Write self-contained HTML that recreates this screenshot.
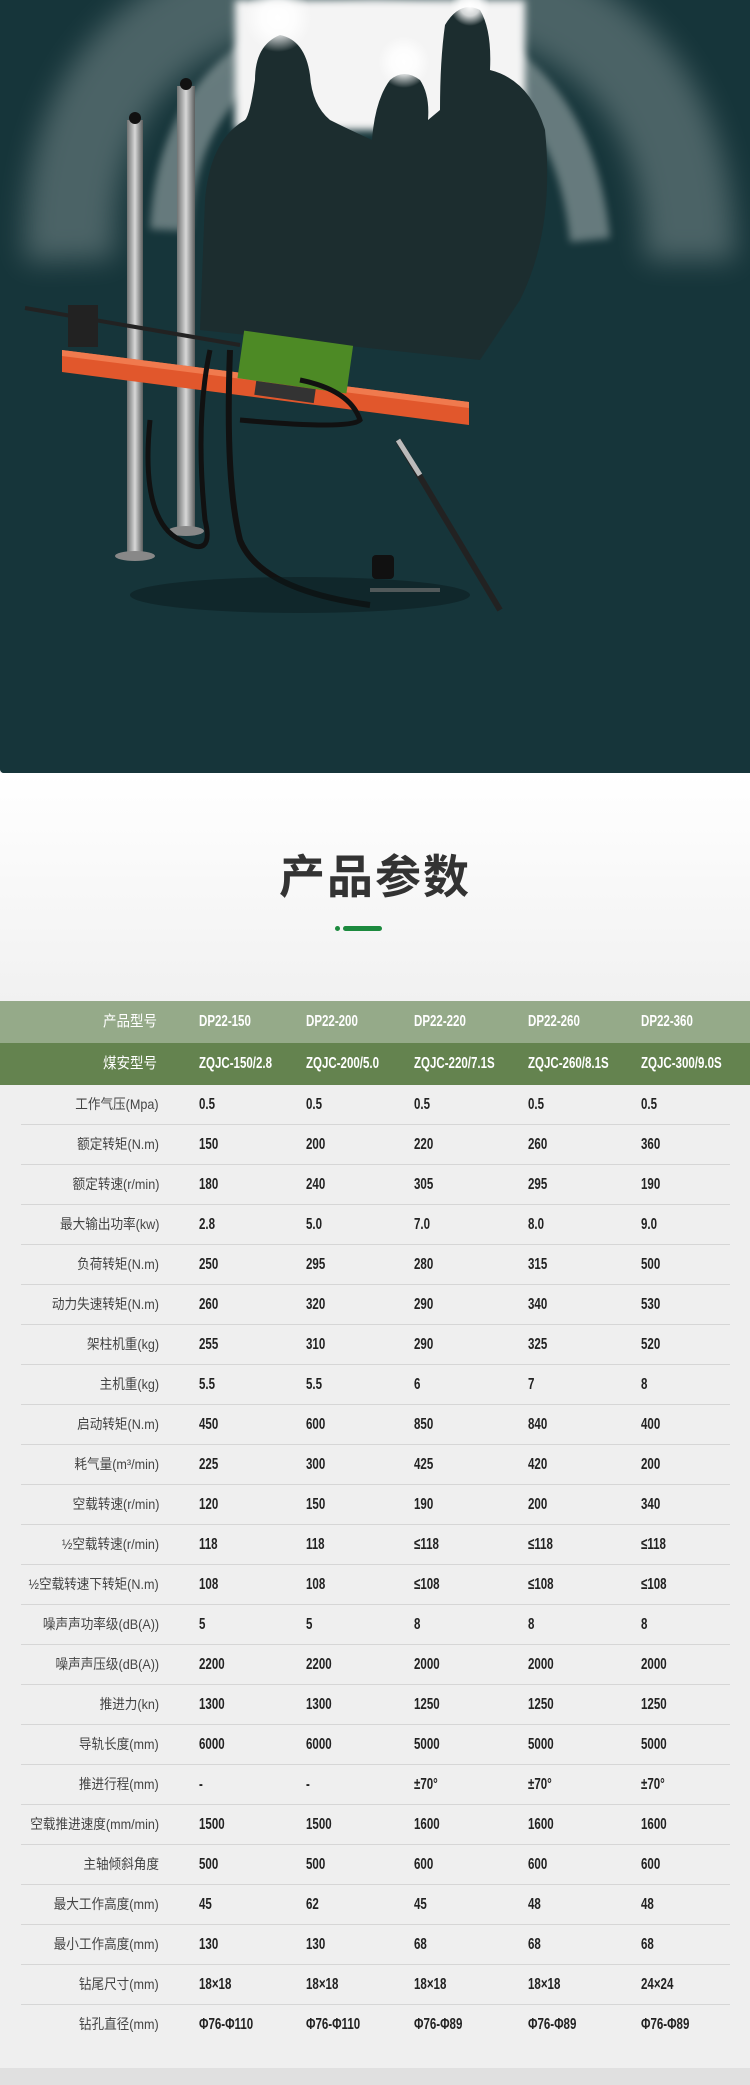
<!DOCTYPE html>
<html><head><meta charset="utf-8"><style>
*{margin:0;padding:0;box-sizing:border-box}
body{width:750px;height:2085px;background:#efefef;font-family:"Liberation Sans","Noto Sans CJK SC",sans-serif;overflow:hidden;position:relative}
.hero{position:absolute;left:0;top:0;width:750px;height:773px;background:#16353a;overflow:hidden;border-bottom-left-radius:4px}
.mid{position:absolute;left:0;top:773px;width:750px;height:228px;background:linear-gradient(#fff,#f1f1f1)}
h1{position:absolute;top:842px;left:0;width:750px;text-align:center;font-size:46px;font-weight:bold;color:#333;letter-spacing:2px;font-family:"Noto Sans CJK SC",sans-serif;line-height:64px}
.dot{position:absolute;left:335px;top:926px;width:5px;height:5px;border-radius:3px;background:#1c8a3e}
.bar{position:absolute;left:343px;top:926px;width:39px;height:5px;border-radius:3px;background:#1c8a3e}
.rows{position:absolute;top:1085px;left:0;width:750px}
.r{position:relative;height:40px;border-bottom:1px solid #d6d6d6;margin:0 20px 0 21px}
.r:last-child{border-bottom:none}
.r span,.hd span{position:absolute;top:0;line-height:39px;font-size:16px;font-weight:bold;color:#222;white-space:nowrap;transform:scaleX(.72);transform-origin:left center}
.r .lab{right:571px;font-weight:normal;font-size:14px;color:#444;transform:scaleX(.9);transform-origin:right center}
.hd{position:absolute;left:0;width:750px;height:42px}
.hd span{line-height:42px;color:#fff}
.hd .lab{right:593px;font-weight:normal;font-size:15px;transform:scaleX(.9);transform-origin:right center}
.c1{left:178px}.c2{left:285px}.c3{left:393px}.c4{left:507px}.c5{left:620px}
.hd .c1{left:199px}.hd .c2{left:306px}.hd .c3{left:414px}.hd .c4{left:528px}.hd .c5{left:641px}
.foot{position:absolute;left:0;top:2068px;width:750px;height:17px;background:#e0e0e0}
</style></head><body>
<div class="hero">
<svg width="750" height="773" viewBox="0 0 750 773">
<defs>
<filter id="bl" x="-20%" y="-20%" width="140%" height="140%"><feGaussianBlur stdDeviation="14"/></filter>
<filter id="bl2"><feGaussianBlur stdDeviation="4"/></filter>
<radialGradient id="glow" cx="0.5" cy="0.5" r="0.5"><stop offset="0" stop-color="#fff"/><stop offset=".5" stop-color="#fff" stop-opacity=".8"/><stop offset="1" stop-color="#fff" stop-opacity="0"/></radialGradient>
<linearGradient id="col" x1="0" x2="1"><stop offset="0" stop-color="#6f7272"/><stop offset=".5" stop-color="#d8d8d8"/><stop offset="1" stop-color="#5a5d5d"/></linearGradient>
</defs>
<rect width="750" height="773" fill="#16353a"/>
<path d="M70 260 Q60 -10 375 -30 Q690 -10 690 260" fill="none" stroke="#8c9b9c" stroke-width="90" opacity=".45" filter="url(#bl)"/>
<path d="M170 230 Q180 40 375 20 Q570 40 590 240" fill="none" stroke="#b5bfbf" stroke-width="40" opacity=".5" filter="url(#bl2)"/>
<rect x="235" y="0" width="290" height="130" fill="#f4f4f4" filter="url(#bl2)"/>
<path d="M200 330 L205 200 Q210 140 245 120 Q250 115 255 80 Q255 45 280 35 Q305 40 310 75 Q312 105 330 120 Q350 130 372 140 Q375 100 390 80 Q404 68 420 80 Q430 95 428 120 L440 110 Q440 60 445 25 Q460 0 480 10 Q492 30 490 70 Q530 80 545 130 Q555 230 520 300 L480 360 Z" fill="#1c2d2f"/>
<circle cx="278" cy="18" r="34" fill="url(#glow)"/>
<circle cx="404" cy="62" r="26" fill="url(#glow)"/>
<circle cx="470" cy="6" r="20" fill="url(#glow)"/>
<rect x="127" y="120" width="16" height="440" fill="url(#col)"/>
<rect x="177" y="86" width="18" height="445" fill="url(#col)"/>
<circle cx="135" cy="118" r="6" fill="#111"/><circle cx="186" cy="84" r="6" fill="#111"/>
<ellipse cx="135" cy="556" rx="20" ry="5" fill="#888"/>
<ellipse cx="186" cy="531" rx="18" ry="5" fill="#888"/>
<line x1="25" y1="308" x2="240" y2="345" stroke="#222" stroke-width="4"/>
<rect x="68" y="305" width="30" height="42" fill="#222"/>
<polygon points="62,350 469,402 469,425 62,372" fill="#e1572c"/>
<polygon points="62,350 469,402 469,408 62,356" fill="#f07a4e"/>
<rect x="240" y="338" width="110" height="48" fill="#4d8a25" transform="rotate(8 295 364)"/>
<rect x="255" y="385" width="60" height="14" fill="#333" transform="rotate(8 285 392)"/>
<path d="M210 350 Q195 420 205 520 Q215 560 180 540 Q140 520 150 420" fill="none" stroke="#111" stroke-width="5"/>
<path d="M230 350 Q225 480 240 540 Q260 590 370 605" fill="none" stroke="#111" stroke-width="6"/>
<path d="M300 380 Q350 390 360 420 Q350 430 240 420" fill="none" stroke="#111" stroke-width="5"/>
<line x1="398" y1="440" x2="500" y2="610" stroke="#222" stroke-width="6"/>
<line x1="398" y1="440" x2="420" y2="475" stroke="#bbb" stroke-width="5"/>
<rect x="372" y="555" width="22" height="24" rx="4" fill="#111"/>
<line x1="370" y1="590" x2="440" y2="590" stroke="#999" stroke-width="4"/>
<ellipse cx="300" cy="595" rx="170" ry="18" fill="#0a1a1c" opacity=".5"/>
</svg>
</div>
<div class="mid"></div>
<h1>产品参数</h1>
<div class="dot"></div><div class="bar"></div>
<div class="hd" style="top:1001px;background:#95aa89"><span class="lab">产品型号</span><span class="c1">DP22-150</span><span class="c2">DP22-200</span><span class="c3">DP22-220</span><span class="c4">DP22-260</span><span class="c5">DP22-360</span></div>
<div class="hd" style="top:1043px;background:#64834f"><span class="lab">煤安型号</span><span class="c1">ZQJC-150/2.8</span><span class="c2">ZQJC-200/5.0</span><span class="c3">ZQJC-220/7.1S</span><span class="c4">ZQJC-260/8.1S</span><span class="c5">ZQJC-300/9.0S</span></div>
<div class="rows">
<div class="r"><span class="lab">工作气压(Mpa)</span><span class="c1">0.5</span><span class="c2">0.5</span><span class="c3">0.5</span><span class="c4">0.5</span><span class="c5">0.5</span></div>
<div class="r"><span class="lab">额定转矩(N.m)</span><span class="c1">150</span><span class="c2">200</span><span class="c3">220</span><span class="c4">260</span><span class="c5">360</span></div>
<div class="r"><span class="lab">额定转速(r/min)</span><span class="c1">180</span><span class="c2">240</span><span class="c3">305</span><span class="c4">295</span><span class="c5">190</span></div>
<div class="r"><span class="lab">最大输出功率(kw)</span><span class="c1">2.8</span><span class="c2">5.0</span><span class="c3">7.0</span><span class="c4">8.0</span><span class="c5">9.0</span></div>
<div class="r"><span class="lab">负荷转矩(N.m)</span><span class="c1">250</span><span class="c2">295</span><span class="c3">280</span><span class="c4">315</span><span class="c5">500</span></div>
<div class="r"><span class="lab">动力失速转矩(N.m)</span><span class="c1">260</span><span class="c2">320</span><span class="c3">290</span><span class="c4">340</span><span class="c5">530</span></div>
<div class="r"><span class="lab">架柱机重(kg)</span><span class="c1">255</span><span class="c2">310</span><span class="c3">290</span><span class="c4">325</span><span class="c5">520</span></div>
<div class="r"><span class="lab">主机重(kg)</span><span class="c1">5.5</span><span class="c2">5.5</span><span class="c3">6</span><span class="c4">7</span><span class="c5">8</span></div>
<div class="r"><span class="lab">启动转矩(N.m)</span><span class="c1">450</span><span class="c2">600</span><span class="c3">850</span><span class="c4">840</span><span class="c5">400</span></div>
<div class="r"><span class="lab">耗气量(m³/min)</span><span class="c1">225</span><span class="c2">300</span><span class="c3">425</span><span class="c4">420</span><span class="c5">200</span></div>
<div class="r"><span class="lab">空载转速(r/min)</span><span class="c1">120</span><span class="c2">150</span><span class="c3">190</span><span class="c4">200</span><span class="c5">340</span></div>
<div class="r"><span class="lab">½空载转速(r/min)</span><span class="c1">118</span><span class="c2">118</span><span class="c3">≤118</span><span class="c4">≤118</span><span class="c5">≤118</span></div>
<div class="r"><span class="lab">½空载转速下转矩(N.m)</span><span class="c1">108</span><span class="c2">108</span><span class="c3">≤108</span><span class="c4">≤108</span><span class="c5">≤108</span></div>
<div class="r"><span class="lab">噪声声功率级(dB(A))</span><span class="c1">5</span><span class="c2">5</span><span class="c3">8</span><span class="c4">8</span><span class="c5">8</span></div>
<div class="r"><span class="lab">噪声声压级(dB(A))</span><span class="c1">2200</span><span class="c2">2200</span><span class="c3">2000</span><span class="c4">2000</span><span class="c5">2000</span></div>
<div class="r"><span class="lab">推进力(kn)</span><span class="c1">1300</span><span class="c2">1300</span><span class="c3">1250</span><span class="c4">1250</span><span class="c5">1250</span></div>
<div class="r"><span class="lab">导轨长度(mm)</span><span class="c1">6000</span><span class="c2">6000</span><span class="c3">5000</span><span class="c4">5000</span><span class="c5">5000</span></div>
<div class="r"><span class="lab">推进行程(mm)</span><span class="c1">-</span><span class="c2">-</span><span class="c3">±70°</span><span class="c4">±70°</span><span class="c5">±70°</span></div>
<div class="r"><span class="lab">空载推进速度(mm/min)</span><span class="c1">1500</span><span class="c2">1500</span><span class="c3">1600</span><span class="c4">1600</span><span class="c5">1600</span></div>
<div class="r"><span class="lab">主轴倾斜角度</span><span class="c1">500</span><span class="c2">500</span><span class="c3">600</span><span class="c4">600</span><span class="c5">600</span></div>
<div class="r"><span class="lab">最大工作高度(mm)</span><span class="c1">45</span><span class="c2">62</span><span class="c3">45</span><span class="c4">48</span><span class="c5">48</span></div>
<div class="r"><span class="lab">最小工作高度(mm)</span><span class="c1">130</span><span class="c2">130</span><span class="c3">68</span><span class="c4">68</span><span class="c5">68</span></div>
<div class="r"><span class="lab">钻尾尺寸(mm)</span><span class="c1">18×18</span><span class="c2">18×18</span><span class="c3">18×18</span><span class="c4">18×18</span><span class="c5">24×24</span></div>
<div class="r"><span class="lab">钻孔直径(mm)</span><span class="c1">Φ76-Φ110</span><span class="c2">Φ76-Φ110</span><span class="c3">Φ76-Φ89</span><span class="c4">Φ76-Φ89</span><span class="c5">Φ76-Φ89</span></div>
</div>
<div class="foot"></div>
</body></html>
